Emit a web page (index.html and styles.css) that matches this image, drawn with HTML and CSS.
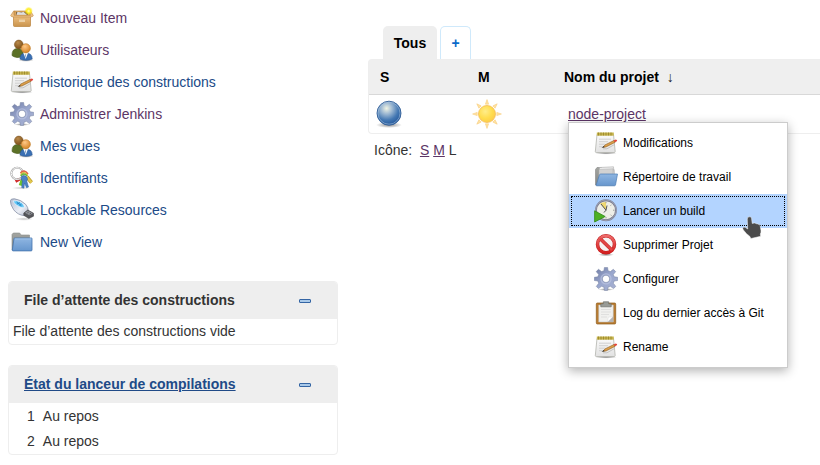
FILE: index.html
```html
<!DOCTYPE html>
<html lang="fr">
<head>
<meta charset="utf-8">
<title>Jenkins</title>
<link rel="stylesheet" href="styles.css">
</head>
<body>
<svg class="sprite" aria-hidden="true">
  <defs>
    <linearGradient id="g-box" x1="0" y1="0" x2="0" y2="1"><stop offset="0" stop-color="#f0c283"/><stop offset="1" stop-color="#c9934c"/></linearGradient>
    <radialGradient id="g-brown" cx=".4" cy=".3" r=".7"><stop offset="0" stop-color="#b98a4c"/><stop offset="1" stop-color="#7c4f18"/></radialGradient>
    <radialGradient id="g-skin" cx=".4" cy=".3" r=".7"><stop offset="0" stop-color="#ffc987"/><stop offset="1" stop-color="#d58426"/></radialGradient>
    <linearGradient id="g-paper" x1="0" y1="0" x2="0" y2="1"><stop offset="0" stop-color="#fafafa"/><stop offset="1" stop-color="#e2e2e2"/></linearGradient>
    <linearGradient id="g-gear" x1="0" y1="0" x2="1" y2="1"><stop offset="0" stop-color="#6f7ba4"/><stop offset=".5" stop-color="#9aa7ce"/><stop offset="1" stop-color="#a9b2d2"/></linearGradient>
    <linearGradient id="g-folder" x1="0" y1="0" x2="0" y2="1"><stop offset="0" stop-color="#8fb6e2"/><stop offset="1" stop-color="#6696cd"/></linearGradient>
    <linearGradient id="g-grey" x1="0" y1="0" x2="0" y2="1"><stop offset="0" stop-color="#a3a5a1"/><stop offset="1" stop-color="#848683"/></linearGradient>
    <linearGradient id="g-usb" x1="0" y1="0" x2="1" y2="1"><stop offset="0" stop-color="#b4bed2"/><stop offset=".6" stop-color="#eceff6"/><stop offset="1" stop-color="#b0b7c8"/></linearGradient>
    <radialGradient id="g-ball" cx=".4" cy=".3" r=".68"><stop offset="0" stop-color="#f1f4e4"/><stop offset=".35" stop-color="#9db8d2"/><stop offset=".72" stop-color="#4478b3"/><stop offset="1" stop-color="#285c9e"/></radialGradient>
    <radialGradient id="g-sun" cx=".4" cy=".35" r=".7"><stop offset="0" stop-color="#ffed8a"/><stop offset=".6" stop-color="#ffdc4c"/><stop offset="1" stop-color="#fbc94c"/></radialGradient>
    <radialGradient id="g-glow"><stop offset="0" stop-color="#fffec0"/><stop offset=".5" stop-color="#ffee20"/><stop offset="1" stop-color="#ffe800" stop-opacity=".15"/></radialGradient>
    <radialGradient id="g-shadow"><stop offset="0" stop-color="#000" stop-opacity=".45"/><stop offset="1" stop-color="#000" stop-opacity="0"/></radialGradient>
    <linearGradient id="g-red" x1="0" y1="0" x2="0" y2="1"><stop offset="0" stop-color="#ee6a6a"/><stop offset="1" stop-color="#d42020"/></linearGradient>

    <symbol id="i-box" viewBox="0 0 24 24">
      <path d="M4 5h16v6H4z" fill="#d9a560" stroke="#b98038" stroke-width=".6"/>
      <path d="M6 6h12v3.500H6z" fill="#816845"/>
      <path d="M6.500 9l1-3.300 4 .8 2-.8 3.500 3.300z" fill="#dedede"/>
      <path d="M3.500 9.500h17v10q0 1-1 1h-15q-1 0-1-1z" fill="url(#g-box)" stroke="#b98139" stroke-width=".7"/>
      <path d="M3.800 4.800L.7 9.500q0 1.200 2.800 1.500h17q2.800-.3 2.800-1.500l-2.900-4.700.2 4.500H4z" fill="#edc187" stroke="#c18a46" stroke-width=".6"/>
      <path d="M9 13.500h6v2.500H9z" fill="#ecd0a5"/>
      <circle cx="18.700" cy="5" r="4" fill="url(#g-glow)"/>
    </symbol>
    <symbol id="i-users" viewBox="0 0 24 24">
      <ellipse cx="16" cy="22" rx="8" ry="1.800" fill="url(#g-shadow)"/>
      <path d="M2 17.500Q1.800 10.500 7.500 10.500q6 0 6 7-3 2.500-6.500 2t-5-2z" fill="#5c7127" stroke="#445817" stroke-width=".6"/>
      <circle cx="8.800" cy="6.500" r="4.400" fill="url(#g-brown)" stroke="#79501f" stroke-width=".5"/>
      <path d="M10 21Q9.800 15 16 15t6.200 6q-3 1.400-6.200 1.300-3.500 0-6-1.300z" fill="#3a70b4" stroke="#2a5793" stroke-width=".6"/>
      <path d="M13.400 15h4.600l-2.300 6z" fill="#fff"/>
      <path d="M15.300 16l.9.500-.5 3.500-.7-2z" fill="#8ba4c3"/>
      <circle cx="15.800" cy="10.300" r="4.600" fill="url(#g-skin)" stroke="#bd7721" stroke-width=".6"/>
    </symbol>
    <symbol id="i-note" viewBox="0 0 24 24">
      <ellipse cx="12" cy="22.200" rx="11" ry="1.400" fill="url(#g-shadow)"/>
      <path d="M3 3.500h16.500l1.700 17q0 1-1 1H2.300q-1 0-1-1z" fill="url(#g-paper)" stroke="#a9aaa3" stroke-width=".7"/>
      <path d="M2.800 1.500h17v3.200h-17z" fill="#c6b44d"/>
      <path d="M4.500 1.500v3M7 1.500v3M9.500 1.500v3M12 1.500v3M14.500 1.500v3M17 1.500v3" stroke="#94822a" stroke-width=".8"/>
      <path d="M5 8.200h12M5 10.700h9M5 13.200h6M5 15.700h4" stroke="#c6c6c6" stroke-width=".8"/>
      <path d="M9 16.200l2-2.300 9-4.400 1.100 1.800-9.200 4.700z" fill="#dda04b" stroke="#8a5818" stroke-width=".6"/>
      <path d="M7.600 17l2.300-1.900.7 1.200z" fill="#333"/>
      <path d="M19.700 9.400l2-1q1.600 0 1.500 1.600l-2.200 1.200z" fill="#e2463b"/>
      <path d="M9 17.800h4l7-4" fill="none" stroke="#aaa" stroke-width=".6"/>
    </symbol>
    <symbol id="i-gear" viewBox="0 0 24 24">
      <ellipse cx="12" cy="22.500" rx="8" ry="1.400" fill="url(#g-shadow)"/>
      <path fill-rule="evenodd" fill="url(#g-gear)" stroke="#74809f" stroke-width=".5" d="M10.400.4h3.200l.5 3.300 2.300.9 2.900-2.300 2.400 2.300-2.400 3 .9 2.200 3.500.5v3.200l-3.500.5-.9 2.200 2.500 3.200-2.300 2.200-3.100-2.300-2.300.9-.5 3.200h-3.200l-.5-3.200-2.300-.9-3.100 2.300-2.200-2.200 2.400-3.200-.9-2.200-3.500-.5v-3.200l3.500-.5.9-2.200-2.500-3L4.500 2.300l3.100 2.300 2.300-.9zM12 8.300a3.600 3.600 0 1 0 .01 0z"/>
      <circle cx="12" cy="11.900" r="5" fill="none" stroke="#bdc6e2" stroke-width="1.300" opacity=".7"/>
    </symbol>
    <symbol id="i-keys" viewBox="0 0 24 24">
      <ellipse cx="11" cy="22" rx="10" ry="1.200" fill="url(#g-shadow)" opacity=".5"/>
      <path d="M17 11l4.500 5.500" stroke="#b79522" stroke-width="3.600"/><path d="M17 11l4.500 5.500" stroke="#e3c94d" stroke-width="2.400"/>
      <path d="M10 13l-4.500 2.300" stroke="#d12828" stroke-width="3"/><path d="M12.500 13l-2.200 6.500" stroke="#6fc62e" stroke-width="3.200"/>
      <circle cx="7.200" cy="7.500" r="5.900" fill="none" stroke="#949494" stroke-width="1.900"/><circle cx="7.200" cy="7.500" r="5.900" fill="none" stroke="#fafafa" stroke-width="1"/>
      <path d="M10.500 7q3.500-4.500 7.500 1" fill="none" stroke="#e06046" stroke-width="1.600"/>
      <path d="M10.500 8.500q3.500-4 7.300.8" fill="none" stroke="#dfb93b" stroke-width="1.300"/>
      <path d="M10.700 10q3-4 6.600 0" fill="none" stroke="#67b83a" stroke-width="1.500"/>
      <path d="M11.500 10.500q2.600-2.300 5.200.3 1.700 2.200.1 4.400l1.700 5.800-2 .8-1.900-4.800-.7 5.200-2.200-.6.700-6.500q-2.100-2.400-.9-4.600z" fill="#4b83c5" stroke="#315f9b" stroke-width=".5"/>
    </symbol>
    <symbol id="i-usb" viewBox="0 0 24 24">
      <ellipse cx="14" cy="21" rx="9" ry="1.800" fill="url(#g-shadow)" opacity=".5"/>
      <path d="M.4 2.800Q.5.500 4.500.8q6.500.9 11 5.400 2.700 3 2.900 6.800l-4 4.700q-6.600-.7-10.700-5.900Q.2 6.500.4 2.800z" fill="url(#g-usb)" stroke="#8791a6" stroke-width=".8"/>
      <path d="M3 3Q7.500 1.800 11.800 4.900q2.400 2 2.700 4.400-3.800 1-7.800-2.100Q3.700 5 3 3z" fill="#5cc4f5" stroke="#f8fbff" stroke-width=".6"/>
      <path d="M6.500 3.800l5 4.200M7 6l3-1.500M9.500 7.500l2-1.500" stroke="#2478b8" stroke-width=".7"/>
      <path d="M13.800 15l4-3 5.700 3.200v3l-4.700 2.300-5-3.200z" fill="#55565a" stroke="#303033" stroke-width=".5"/>
      <path d="M15 14.700l3-2.100 4.800 2.900-3.500 1.800z" fill="#909399"/>
      <path d="M17.500 14.800l1-.6M19.700 16l1-.6" stroke="#333" stroke-width=".9"/>
    </symbol>
    <symbol id="i-folder" viewBox="0 0 24 24">
      <path d="M2 20V4.500L3.300 3h6.400L11 5h8.500v15z" fill="url(#g-grey)" stroke="#8b8d89" stroke-width=".6"/>
      <path d="M4.600 8h17q.4 0 .4.600V20q0 .9-.8.900H3q-.8 0-.7-.9L4 8.600q.1-.6.600-.6z" fill="url(#g-folder)" stroke="#4473ad" stroke-width=".8"/>
      <path d="M4.900 8.900h16.300" stroke="#b0cdec" stroke-width=".7"/>
    </symbol>
    <symbol id="i-folder-open" viewBox="0 0 24 24">
      <path d="M1.500 20V4.500L3 2.500h4.500L9 4.500H20V20z" fill="url(#g-grey)" stroke="#858585" stroke-width=".6"/>
      <path d="M5.500 2.500L19.500 1.800l.7 10H5z" fill="#ececec" stroke="#ababab" stroke-width=".6"/>
      <path d="M5 4.500l14-.8V14H5z" fill="#d2d2d2" stroke="#aaa" stroke-width=".4"/>
      <path d="M6.700 9h16.800l-2 11q-.2.800-1 .8H2.800q-.9 0-.6-.8l3.300-10.300q.3-.7 1.200-.7z" fill="url(#g-folder)" stroke="#4c7db5" stroke-width=".7"/>
    </symbol>
    <symbol id="i-clock" viewBox="0 0 24 24">
      <circle cx="12" cy="11.200" r="10" fill="#eeeee7" stroke="#777a8f" stroke-width="1.900"/>
      <circle cx="12" cy="11.200" r="10.300" fill="none" stroke="#b6b8c8" stroke-width=".6"/>
      <path d="M12 11.200L6 4.500q2.400-1.700 6-1.600z" fill="#efd871"/>
      <path d="M7 5l5 6.200 1-4.700M12 11.200l-2 2.300" fill="none" stroke="#555" stroke-width="1"/>
      <path d="M12 2.700v1.500M12 18v1.500M19 11.200h1.500M17.500 5.700l-1 1M17.500 16.700l-1-1" stroke="#888" stroke-width=".8"/>
      <path d="M.6 11.800L11.200 17.500.6 23z" fill="#4db124" stroke="#318a17" stroke-width=".8"/>
    </symbol>
    <symbol id="i-stop" viewBox="0 0 24 24">
      <ellipse cx="12" cy="21.700" rx="8" ry="1.600" fill="url(#g-shadow)"/>
      <circle cx="12" cy="11.300" r="8.500" fill="#f7f2f2" stroke="#c12020" stroke-width="3.500"/>
      <path d="M6 5.500l12 11.700" stroke="#c12020" stroke-width="3.400"/>
      <circle cx="12" cy="11.300" r="8.500" fill="none" stroke="url(#g-red)" stroke-width="2.500"/>
      <path d="M6 5.500l12 11.700" stroke="#e14545" stroke-width="2.500"/>
    </symbol>
    <symbol id="i-clip" viewBox="0 0 24 24">
      <rect x="2.300" y="2" width="19.400" height="21" rx="1" fill="#b97c31" stroke="#8e5c1b" stroke-width=".7"/>
      <path d="M4.700 4h14.600v17H4.700z" fill="#f1f1ef" stroke="#bbb" stroke-width=".5"/>
      <path d="M7 8.500h10M7 11h10M7 13.500h8M7 16h6" stroke="#dcdcda" stroke-width=".8"/>
      <path d="M19 15.500L13.500 21H19z" fill="#b4b4b4"/><path d="M13.500 21l.8-4.700 4.700-.8z" fill="#fff" stroke="#ccc" stroke-width=".3"/>
      <path d="M6.800 5.800V2.800h2.500V.8h5.400v2h2.500v3z" fill="#989b96" stroke="#6d706a" stroke-width=".7"/>
    </symbol>
    <symbol id="i-ball" viewBox="0 0 32 32">
      <ellipse cx="16" cy="27" rx="13" ry="3" fill="url(#g-shadow)"/>
      <circle cx="16" cy="15.200" r="12" fill="url(#g-ball)" stroke="#325f97" stroke-width=".9"/>
      <circle cx="16" cy="15.200" r="11" fill="none" stroke="#aec7e1" stroke-width=".8" opacity=".65"/>
    </symbol>
    <symbol id="i-sun" viewBox="0 0 32 32">
      <g fill="#ffe3a3" stroke="#f8cd7c" stroke-width=".6">
        <path id="ray" d="M16 1.600l1.600 4.600h-3.200z"/>
        <use href="#ray" transform="rotate(45 16 16)"/><use href="#ray" transform="rotate(90 16 16)"/>
        <use href="#ray" transform="rotate(135 16 16)"/><use href="#ray" transform="rotate(180 16 16)"/>
        <use href="#ray" transform="rotate(225 16 16)"/><use href="#ray" transform="rotate(270 16 16)"/>
        <use href="#ray" transform="rotate(315 16 16)"/>
      </g>
      <circle cx="16" cy="16" r="8.500" fill="url(#g-sun)" stroke="#f4bd55" stroke-width=".8"/>
    </symbol>
  </defs>
</svg>

<div class="page">
  <aside class="side">
    <nav class="tasks">
      <a class="task visited"><svg class="icon"><use href="#i-box"/></svg>Nouveau Item</a>
      <a class="task visited"><svg class="icon"><use href="#i-users"/></svg>Utilisateurs</a>
      <a class="task"><svg class="icon"><use href="#i-note"/></svg>Historique des constructions</a>
      <a class="task visited"><svg class="icon"><use href="#i-gear"/></svg>Administrer Jenkins</a>
      <a class="task"><svg class="icon"><use href="#i-users"/></svg>Mes vues</a>
      <a class="task"><svg class="icon"><use href="#i-keys"/></svg>Identifiants</a>
      <a class="task"><svg class="icon"><use href="#i-usb"/></svg>Lockable Resources</a>
      <a class="task"><svg class="icon"><use href="#i-folder"/></svg>New View</a>
    </nav>
    <section class="pane">
      <header class="pane-head"><span>File d’attente des constructions</span><i class="collapse"></i></header>
      <div class="pane-empty">File d’attente des constructions vide</div>
    </section>
    <section class="pane">
      <header class="pane-head"><a class="pane-link">État du lanceur de compilations</a><i class="collapse"></i></header>
      <div class="executor"><span class="num">1</span><span>Au repos</span></div>
      <div class="executor"><span class="num">2</span><span>Au repos</span></div>
    </section>
  </aside>

  <main class="main">
    <div class="tabs">
      <div class="tab active">Tous</div>
      <div class="tab add">+</div>
    </div>
    <div class="table">
      <div class="row head"><span>S</span><span>M</span><span>Nom du projet&nbsp; <span class="arrow">↓</span></span></div>
      <div class="row job">
        <span class="cell"><svg class="status"><use href="#i-ball"/></svg></span>
        <span class="cell"><svg class="status"><use href="#i-sun"/></svg></span>
        <div class="project">
          <a class="name">node-project</a>
          <div class="menu">
            <div class="item"><svg class="icon"><use href="#i-note"/></svg>Modifications</div>
            <div class="item"><svg class="icon"><use href="#i-folder-open"/></svg>Répertoire de travail</div>
            <div class="item selected"><svg class="icon"><use href="#i-clock"/></svg>Lancer un build
              <svg class="pointer" viewBox="0 0 20 23"><path d="M7 .8q1.800-.4 2.500 1.200l.7 5.500 2-.5q1.200-.2 1.800.8 1.300-.5 2.200.5 1.400-.1 1.900 1.100l.9 5.300q.2 1.800-.7 3.300l.3 2.300-9.700 2.200-1.200-2.300q-3.200-1.900-6.300-6.200-1.300-1.700-.1-2.700 1.400-.8 4.400 1.700L5.300 3Q5.300 1.200 7 .8z" fill="#4b4b4b" stroke="#f5f5f5" stroke-width=".5"/></svg>
            </div>
            <div class="item"><svg class="icon"><use href="#i-stop"/></svg>Supprimer Projet</div>
            <div class="item"><svg class="icon"><use href="#i-gear"/></svg>Configurer</div>
            <div class="item"><svg class="icon"><use href="#i-clip"/></svg>Log du dernier accès à Git</div>
            <div class="item"><svg class="icon"><use href="#i-note"/></svg>Rename</div>
          </div>
        </div>
      </div>
    </div>
    <div class="sizes">Icône:&nbsp; <a>S</a> <a>M</a> L</div>
  </main>
</div>
</body>
</html>
```
FILE: styles.css
```css
* { box-sizing: border-box; }
html, body { margin: 0; height: 100%; overflow: hidden; }
body {
  background: #fff;
  color: #333;
  font: 14px/20px "Liberation Sans", Arial, sans-serif;
}
.sprite { position: absolute; width: 0; height: 0; }
.page { display: flex; gap: 30px; padding: 2px 0 0 8px; height: 465px; }
.side { width: 330px; flex: none; }
.tasks { margin-bottom: 23px; }
.task { display: flex; align-items: center; gap: 6px; height: 32px; padding-left: 2px; color: #204a87; }
.visited, .name, .sizes a { color: #5c3566; }
.icon { width: 24px; height: 24px; flex: none; }

.pane { border: 1px solid #eee; border-radius: 4px; overflow: hidden; margin-bottom: 20px; }
.pane-head {
  display: flex; align-items: center; justify-content: space-between;
  height: 37px; padding: 0 26px 2px 15px;
  background: #eee; font-weight: bold;
}
.pane-link { color: #204a87; text-decoration: underline; }
.collapse { width: 12px; height: 4px; margin-top: 2px; border: 1px solid #3465a4; border-radius: 1px; background: #a9c9e9; }
.pane-empty { height: 25px; padding: 2px 4px; }
.executor { display: flex; gap: 8px; height: 25px; padding: 3px 0 0 18px; }
.executor:last-child { height: 26px; }

.main { flex: 1; min-width: 0; padding-top: 24px; }
.tabs { display: flex; gap: 3px; padding-left: 15px; height: 33px; font-weight: bold; }
.tab { line-height: 34px; text-align: center; border-radius: 5px 5px 0 0; }
.active { width: 54px; background: #eee; color: #000; }
.add { width: 31px; border: 1px solid #cfe9fb; border-bottom: 0; line-height: 32px; color: #0b6ac9; }

.table { border: 1px solid #eee; border-right: 0; border-radius: 4px 0 0 4px; }
.row { display: grid; grid-template-columns: 98px 86px 1fr; }
.head { height: 35px; padding-left: 11px; line-height: 34px; background: #efefef; border-bottom: 1px solid #d8d8d8; color: #000; font-weight: bold; }
.arrow { font-weight: normal; color: #222; }
.job { height: 38px; align-items: center; grid-template-columns: 98px 101px 1fr; padding-left: 4px; }
.cell { display: flex; }
.status { width: 32px; height: 32px; }
.project { position: relative; margin-left: -4px; }
.name { text-decoration: underline; }

.menu {
  position: absolute; left: 0; top: 18px; z-index: 2;
  width: 220px; padding: 3px 0;
  background: #fff; border: 1px solid #ccc; box-shadow: 0 3px 10px rgba(0, 0, 0, .3);
  color: #000; font-size: 12px;
}
.item { position: relative; display: flex; align-items: center; gap: 5px; height: 34px; padding-left: 25px; white-space: nowrap; }
.selected { background: #b3d4ff; outline: 1px dotted #000; outline-offset: -3px; }
.pointer { position: absolute; left: 173px; top: 22px; width: 20px; height: 23px; z-index: 1; }
.sizes { padding: 6px 0 0 6px; }
.sizes a { text-decoration: underline; }
```
